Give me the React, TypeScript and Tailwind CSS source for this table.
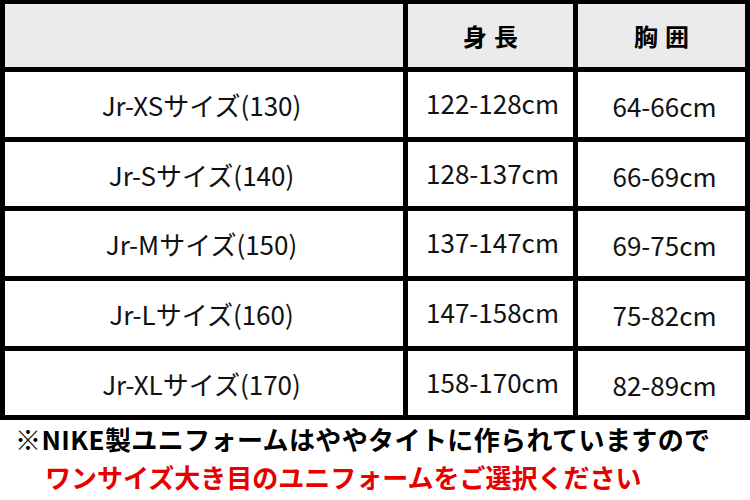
import React from "react"

const rows = [
  { size: "Jr-XSサイズ(130)", height: "122-128cm", chest: "64-66cm" },
  { size: "Jr-Sサイズ(140)", height: "128-137cm", chest: "66-69cm" },
  { size: "Jr-Mサイズ(150)", height: "137-147cm", chest: "69-75cm" },
  { size: "Jr-Lサイズ(160)", height: "147-158cm", chest: "75-82cm" },
  { size: "Jr-XLサイズ(170)", height: "158-170cm", chest: "82-89cm" },
]

export default function App() {
  return (
    <div className="w-[750px] h-[500px] bg-white font-['Noto_Sans_CJK_JP','Noto_Sans',sans-serif] overflow-hidden">
      {/* Size table */}
      <div className="grid grid-cols-[398px_165px_1fr] grid-rows-[63px_65px_64px_65px_65px_64px] gap-[5px] bg-black pt-[4px] px-[5px] pb-[5px] h-[420px]">
        <div className="bg-[#ebebeb]" />
        <div className="bg-[#ebebeb] flex items-center justify-center gap-[7px] text-[24px] font-bold text-black">
          <span>身</span>
          <span>長</span>
        </div>
        <div className="bg-[#ebebeb] flex items-center justify-center gap-[7px] text-[24px] font-bold text-black">
          <span>胸</span>
          <span>囲</span>
        </div>

        {rows.map((r) => (
          <React.Fragment key={r.size}>
            <div className="bg-white flex items-center justify-center pr-[5px] text-[26px] text-[#111]">
              {r.size}
            </div>
            <div className="bg-white flex items-center justify-center pl-[4px] pb-[4px] text-[26px] text-[#111]">
              {r.height}
            </div>
            <div className="bg-white flex items-center justify-center pl-[6px] pt-[2px] text-[26px] text-[#111]">
              {r.chest}
            </div>
          </React.Fragment>
        ))}
      </div>

      {/* Notes */}
      <div className="text-[26px] font-bold leading-[38px] whitespace-nowrap">
        <p className="pl-[15px] tracking-[0.4px] text-black">※NIKE製ユニフォームはややタイトに作られていますので</p>
        <p className="pl-[45px] text-[#e60000]">ワンサイズ大き目のユニフォームをご選択ください</p>
      </div>
    </div>
  )
}
